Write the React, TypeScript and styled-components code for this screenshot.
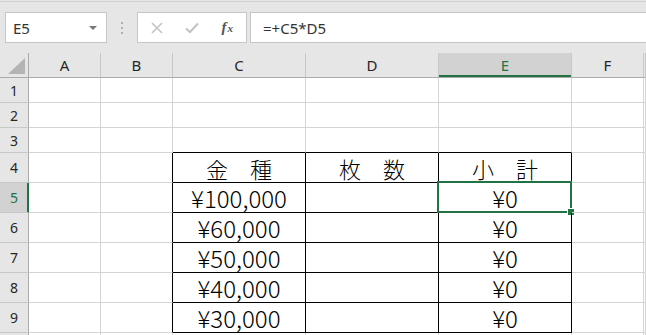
import React from 'react';
import styled, { createGlobalStyle, css } from 'styled-components';

const GREEN = '#217346';
const GRID = '#d4d4d4';

// last column only shows its left edge, so no letter
const columns = ['A', 'B', 'C', 'D', 'E', 'F', ''];
const colWidths = [29, 72, 72, 133, 133, 133, 72];

// row 10 is cut off by the window, only its top border shows
const rowHeights = [25, 25, 25, 30, 30, 30, 30, 30, 30, 30];

// cell content by row number, column letter
const data: Record<number, Record<string, string>> = {
  4: { C: '金\u3000種', D: '枚\u3000数', E: '小\u3000計' },
  5: { C: '¥100,000', E: '¥0' },
  6: { C: '¥60,000', E: '¥0' },
  7: { C: '¥50,000', E: '¥0' },
  8: { C: '¥40,000', E: '¥0' },
  9: { C: '¥30,000', E: '¥0' },
};

const inTable = (row: number, col: string) =>
  row >= 4 && row <= 9 && ['C', 'D', 'E'].includes(col);

const GlobalStyle = createGlobalStyle`
  html, body {
    margin: 0;
    padding: 0;
    background: #e6e6e6;
    font-family: "Noto Sans", "Liberation Sans", sans-serif;
  }
`;

const App = () => {
  return (
    <Page>
      <GlobalStyle />
      <Toolbar>
        <NameBox>
          <span>E5</span>
          <DropArrow />
        </NameBox>
        <Grip>
          <i />
          <i />
          <i />
        </Grip>
        <Buttons>
          <ToolButton>
            <svg width="12" height="12" viewBox="0 0 12 12">
              <path d="M1 1 L11 11 M11 1 L1 11" stroke="#c3c3c3" strokeWidth="1.6" fill="none" />
            </svg>
          </ToolButton>
          <ToolButton>
            <svg width="14" height="12" viewBox="0 0 14 12">
              <path d="M1 6.5 L5 10 L13 1.5" stroke="#c3c3c3" strokeWidth="2" fill="none" />
            </svg>
          </ToolButton>
          <ToolButton>
            <Fx>
              f<span>x</span>
            </Fx>
          </ToolButton>
        </Buttons>
        <Formula>=+C5*D5</Formula>
      </Toolbar>

      <Sheet>
        <Corner>
          <svg width="20" height="18" viewBox="0 0 20 18">
            <path d="M19 1 L19 17 L2 17 Z" fill="#b4b4b4" />
          </svg>
        </Corner>
        {columns.map((c, i) => (
          <ColHeader key={i} $active={c === 'E'}>
            {c}
          </ColHeader>
        ))}

        {rowHeights.map((_, i) => {
          const row = i + 1;
          return (
            <React.Fragment key={row}>
              <RowHeader $active={row === 5}>{row < 10 ? row : ''}</RowHeader>
              {columns.map((col, ci) => {
                const next = columns[ci + 1];
                const blackRight = inTable(row, col) || (next ? inTable(row, next) : false);
                const blackBottom = inTable(row, col) || inTable(row + 1, col);
                const text = data[row]?.[col];
                return (
                  <Cell key={ci} $blackRight={blackRight} $blackBottom={blackBottom} $jp={row === 4}>
                    {text}
                    {row === 5 && col === 'E' && (
                      <Selection>
                        <Handle />
                      </Selection>
                    )}
                  </Cell>
                );
              })}
            </React.Fragment>
          );
        })}
      </Sheet>
    </Page>
  );
};

export default App;

const Page = styled.div`
  width: 646px;
  height: 335px;
  overflow: hidden;
  background: #e6e6e6;
  padding-top: 1px;
  box-sizing: border-box;
`;

const Toolbar = styled.div`
  display: flex;
  align-items: center;
  border-top: 1px solid #d0d0d0;
  padding: 10px 0 10px 5px;
`;

const boxStyles = css`
  height: 31px;
  box-sizing: border-box;
  border: 1px solid #c6c6c6;
  background: #fff;
  display: flex;
  align-items: center;
`;

const NameBox = styled.div`
  ${boxStyles}
  width: 102px;
  padding: 0 7px;
  justify-content: space-between;
  font-size: 15px;
  color: #333;
`;

const DropArrow = styled.div`
  width: 0;
  height: 0;
  border-left: 4px solid transparent;
  border-right: 4px solid transparent;
  border-top: 4px solid #777;
  margin-right: 2px;
`;

const Grip = styled.div`
  width: 30px;
  display: flex;
  flex-direction: column;
  align-items: center;
  gap: 3px;

  i {
    width: 2px;
    height: 2px;
    background: #b0b0b0;
  }
`;

const Buttons = styled.div`
  ${boxStyles}
  width: 110px;
  padding: 0 1px;
`;

const ToolButton = styled.div`
  width: 36px;
  height: 100%;
  display: flex;
  align-items: center;
  justify-content: center;
`;

const Fx = styled.span`
  font-family: "Liberation Serif", serif;
  font-style: italic;
  font-size: 15px;
  color: #555;
  font-weight: bold;

  span {
    font-size: 11px;
    margin-left: 1px;
  }
`;

const Formula = styled.div`
  ${boxStyles}
  flex: 1;
  margin-left: 3px;
  margin-right: -1px;
  padding-left: 12px;
  font-size: 15px;
  color: #333;
`;

const Sheet = styled.div`
  display: grid;
  grid-template-columns: ${colWidths.map(w => `${w}px`).join(' ')} 1fr;
  grid-template-rows: 25px ${rowHeights.map(h => `${h}px`).join(' ')};
  background: #fff;
`;

const headerBase = css`
  background: #e6e6e6;
  box-sizing: border-box;
  display: flex;
  align-items: center;
  justify-content: center;
  overflow: hidden;
  font-size: 15px;
  color: #262626;
`;

const Corner = styled.div`
  ${headerBase}
  border-right: 1px solid #ababab;
  border-bottom: 1px solid #ababab;
  justify-content: flex-end;
  align-items: flex-end;
  padding: 0 2px 2px 0;
`;

const ColHeader = styled.div<{ $active?: boolean }>`
  ${headerBase}
  border-right: 1px solid #c8c8c8;
  border-bottom: 1px solid #ababab;
  ${p =>
    p.$active &&
    css`
      background: #d2d2d2;
      color: ${GREEN};
      box-shadow: inset 0 -2px 0 ${GREEN};
    `}
`;

const RowHeader = styled.div<{ $active?: boolean }>`
  ${headerBase}
  border-right: 1px solid #ababab;
  border-bottom: 1px solid #c8c8c8;
  font-size: 14px;
  ${p =>
    p.$active &&
    css`
      background: #d2d2d2;
      color: ${GREEN};
      border-right-color: ${GREEN};
      box-shadow: inset -1px 0 0 ${GREEN};
    `}
`;

const Cell = styled.div<{ $blackRight?: boolean; $blackBottom?: boolean; $jp?: boolean }>`
  position: relative;
  box-sizing: border-box;
  border-right: 1px solid ${p => (p.$blackRight ? '#000' : GRID)};
  border-bottom: 1px solid ${p => (p.$blackBottom ? '#000' : GRID)};
  display: flex;
  align-items: center;
  justify-content: center;
  font-family: "Noto Sans CJK JP", sans-serif;
  font-weight: 300;
  font-size: ${p => (p.$jp ? '22px' : '24px')};
  line-height: 1;
  color: #000;
  white-space: pre;
`;

const Selection = styled.div`
  position: absolute;
  top: -2px;
  left: -2px;
  right: -1px;
  bottom: -1px;
  border: 2px solid ${GREEN};
  pointer-events: none;
`;

const Handle = styled.div`
  position: absolute;
  right: -4px;
  bottom: -4px;
  width: 6px;
  height: 6px;
  background: ${GREEN};
  border: 1px solid #fff;
  border-bottom: none;
  border-right: none;
`;
